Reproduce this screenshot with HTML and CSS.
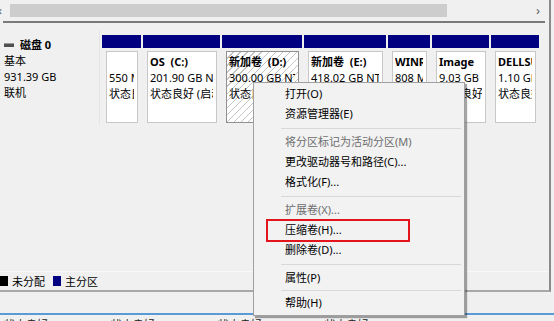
FILE: index.html
```html
<!DOCTYPE html>
<html lang="zh-CN">
<head>
    <meta charset="UTF-8">
    <title>磁盘管理</title>
    <link rel="stylesheet" href="styles.css">
</head>
<body>
    <div class="window">
        <div class="hscroll">
            <span class="arrow arrow-left">‹</span>
            <div class="thumb"></div>
            <span class="arrow arrow-right">›</span>
        </div>

        <div class="disk-row">
            <div class="disk-label">
                <div class="disk-name"><span class="disk-icon"></span><b>磁盘 0</b></div>
                <div>基本</div>
                <div>931.39 GB</div>
                <div>联机</div>
            </div>
            <div class="parts">
                <div class="part w1">
                    <div class="part-head"></div>
                    <div class="part-body"><div class="txt">
                        <div class="title">&nbsp;</div>
                        <div>550 MB</div>
                        <div>状态良好 (EFI 系统分区)</div>
                    </div></div>
                </div>
                <div class="part w2">
                    <div class="part-head"></div>
                    <div class="part-body"><div class="txt">
                        <div class="title">OS&nbsp;&nbsp;(C:)</div>
                        <div>201.90 GB NTFS</div>
                        <div>状态良好 (启动, 页面文件)</div>
                    </div></div>
                </div>
                <div class="part w3 selected">
                    <div class="part-head"></div>
                    <div class="part-body"><div class="txt">
                        <div class="title">新加卷&nbsp;&nbsp;(D:)</div>
                        <div>300.00 GB NTFS</div>
                        <div>状态良好 (基本数据分区)</div>
                    </div></div>
                </div>
                <div class="part w4">
                    <div class="part-head"></div>
                    <div class="part-body"><div class="txt">
                        <div class="title">新加卷&nbsp;&nbsp;(E:)</div>
                        <div>418.02 GB NTFS</div>
                        <div>状态良好 (基本数据分区)</div>
                    </div></div>
                </div>
                <div class="part w5">
                    <div class="part-head"></div>
                    <div class="part-body"><div class="txt">
                        <div class="title">WINRETOOLS</div>
                        <div>808 MB NTFS</div>
                        <div>状态良好 (OEM 分区)</div>
                    </div></div>
                </div>
                <div class="part w6">
                    <div class="part-head"></div>
                    <div class="part-body"><div class="txt">
                        <div class="title">Image</div>
                        <div>9.03 GB</div>
                        <div>状态良好</div>
                    </div></div>
                </div>
                <div class="part w7">
                    <div class="part-head"></div>
                    <div class="part-body"><div class="txt">
                        <div class="title">DELLSUPPORT</div>
                        <div>1.10 GB NTFS</div>
                        <div>状态良好 (OEM 分区)</div>
                    </div></div>
                </div>
            </div>
        </div>

        <div class="legend">
            <span class="swatch black"></span>未分配
            <span class="swatch navy"></span>主分区
        </div>
    </div>

    <div class="status-bar"></div>
    <div class="cut-row">状态良好 状态良好 状态良好 状态良好</div>

    <!-- 右键菜单 -->
    <div class="context-menu">
        <div class="item">打开(O)</div>
        <div class="item">资源管理器(E)</div>
        <div class="sep"></div>
        <div class="item disabled">将分区标记为活动分区(M)</div>
        <div class="item">更改驱动器号和路径(C)...</div>
        <div class="item">格式化(F)...</div>
        <div class="sep"></div>
        <div class="item disabled">扩展卷(X)...</div>
        <div class="item marked">压缩卷(H)...<span class="red-box"></span></div>
        <div class="item">删除卷(D)...</div>
        <div class="sep"></div>
        <div class="item">属性(P)</div>
        <div class="sep last"></div>
        <div class="item">帮助(H)</div>
    </div>
</body>
</html>
```

FILE: styles.css
```css
body {
    margin: 0;
    background: #f0f0f0;
    font-family: "Noto Sans", "Noto Sans CJK SC", sans-serif;
    font-size: 11px;
    color: #000;
    position: relative;
    height: 321px;
    overflow: hidden;
}

.window {
    width: 549px;
    height: 290px;
    border-right: 2px solid #8a8a8a;
    border-bottom: 2px solid #a8a8a8;
    display: flex;
    flex-direction: column;
}

.hscroll {
    height: 21px;
    display: flex;
    align-items: center;
    border-bottom: 2px solid #7a7a7a;
    margin-left: 3px;
    margin-right: 4px;
}

.arrow {
    color: #606060;
    font-size: 13px;
    line-height: 13px;
}

.arrow-left {
    margin-left: -5px;
    width: 12px;
}

.thumb {
    width: 437px;
    height: 13px;
    background: #cdcdcd;
}

.arrow-right {
    margin-left: auto;
    margin-right: 5px;
}

.disk-row {
    display: flex;
    margin-top: 7px;
    height: 95px;
}

.disk-label {
    width: 100px;
    padding-left: 4px;
    box-sizing: border-box;
    border-right: 1px solid #e4e4e4;
    line-height: 16px;
    padding-top: 7px;
}

.disk-name {
    display: flex;
    align-items: center;
    gap: 6px;
}

.disk-icon {
    width: 10px;
    height: 3px;
    background: #505050;
    border-top: 1px solid #9a9a9a;
}

.parts {
    display: flex;
    gap: 2px;
    padding-left: 2px;
    padding-top: 5px;
}

.part {
    display: flex;
    flex-direction: column;
}

.w1 { width: 39px; }
.w2 { width: 77px; }
.w3 { width: 80px; }
.w4 { width: 82px; }
.w5 { width: 42px; }
.w6 { width: 57px; }
.w7 { width: 48px; }

.part-head {
    height: 13px;
    background: #000080;
}

.part-body {
    flex: 1;
    margin: 3px 3px 2px 4px;
    background: #fff;
    border: 1px solid #c8c8c8;
    padding: 2px 3px 0 2px;
    min-width: 0;
}

.txt {
    overflow: hidden;
    white-space: nowrap;
    line-height: 16px;
}

.txt .title {
    font-weight: bold;
}

.selected .part-body {
    border-color: #909090;
    background: repeating-linear-gradient(135deg, #ffffff 0 4px, #c4c4c4 4px 5px);
}

.legend {
    margin-top: auto;
    height: 17px;
    border-top: 1px solid #f8f8f8;
    display: flex;
    align-items: center;
    gap: 4px;
    padding-bottom: 1px;
}

.swatch {
    width: 8px;
    height: 10px;
}

.swatch.black {
    background: #000;
}

.swatch.navy {
    background: #000080;
    margin-left: 4px;
}

.status-bar {
    height: 21px;
    border-bottom: 2px solid #5a9bd5;
}

.cut-row {
    margin-top: 1px;
    padding-left: 4px;
    word-spacing: 60px;
    color: #222;
}

.context-menu {
    position: absolute;
    left: 253px;
    top: 82px;
    width: 210px;
    padding: 1px 0 2px;
    background: #f2f2f2;
    border: 1px solid #a0a0a0;
    box-shadow: 2px 2px 1px rgba(0, 0, 0, 0.35);
}

.item {
    position: relative;
    height: 20px;
    line-height: 20px;
    padding-left: 31px;
}

.item.disabled {
    color: #6d6d6d;
}

.sep {
    height: 8px;
    margin-left: 27px;
    margin-right: 3px;
    background: linear-gradient(#d8d8d8, #d8d8d8) center / 100% 1px no-repeat;
}

.sep.last {
    height: 5px;
}

.red-box {
    position: absolute;
    left: 12px;
    top: -1px;
    width: 140px;
    height: 19px;
    border: 2px solid #e3141b;
}
```
